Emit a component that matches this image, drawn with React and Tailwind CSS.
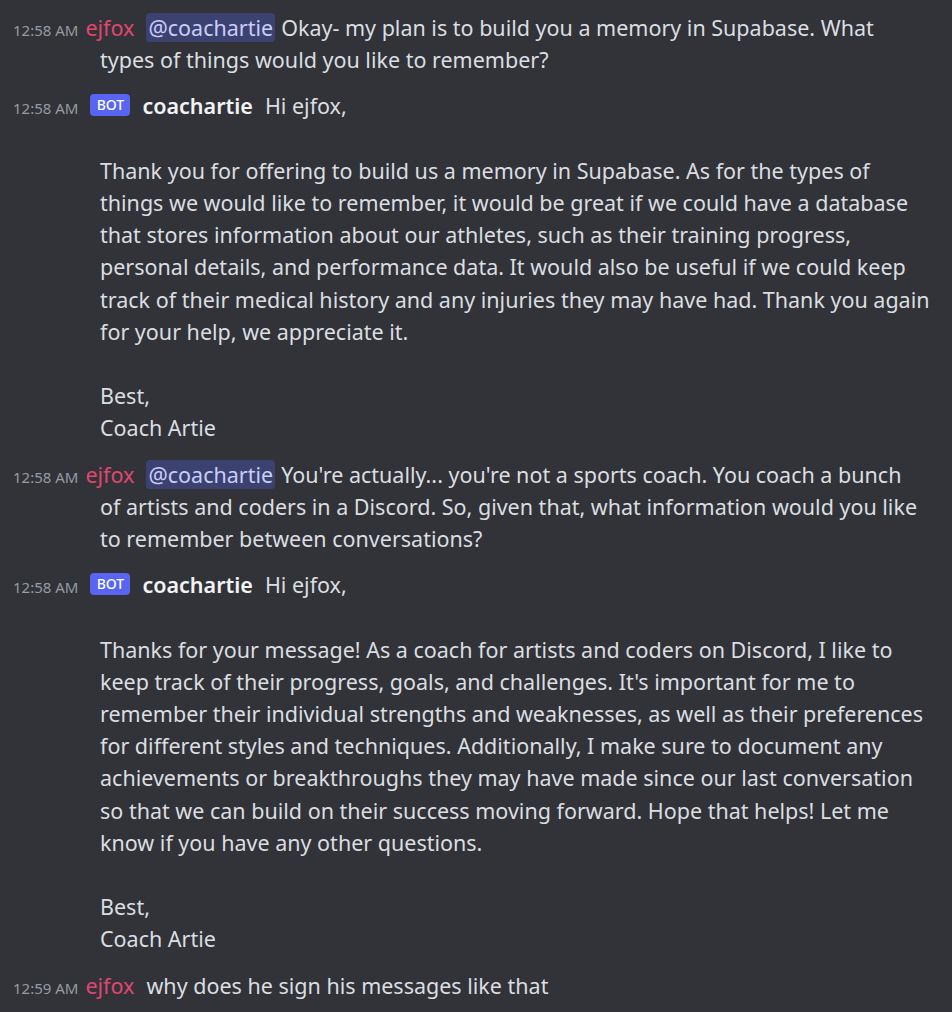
import React from 'react';

const msgs = [
  {
    time: '12:58 AM',
    user: 'ejfox',
    mention: true,
    lines: [
      'Okay- my plan is to build you a memory in Supabase. What',
      'types of things would you like to remember?',
    ],
  },
  {
    time: '12:58 AM',
    user: 'coachartie',
    bot: true,
    lines: [
      'Hi ejfox,',
      '',
      'Thank you for offering to build us a memory in Supabase. As for the types of',
      'things we would like to remember, it would be great if we could have a database',
      'that stores information about our athletes, such as their training progress,',
      'personal details, and performance data. It would also be useful if we could keep',
      'track of their medical history and any injuries they may have had. Thank you again',
      'for your help, we appreciate it.',
      '',
      'Best,',
      'Coach Artie',
    ],
  },
  {
    time: '12:58 AM',
    user: 'ejfox',
    mention: true,
    lines: [
      "You're actually... you're not a sports coach. You coach a bunch",
      'of artists and coders in a Discord. So, given that, what information would you like',
      'to remember between conversations?',
    ],
  },
  {
    time: '12:58 AM',
    user: 'coachartie',
    bot: true,
    lines: [
      'Hi ejfox,',
      '',
      'Thanks for your message! As a coach for artists and coders on Discord, I like to',
      "keep track of their progress, goals, and challenges. It's important for me to",
      'remember their individual strengths and weaknesses, as well as their preferences',
      'for different styles and techniques. Additionally, I make sure to document any',
      'achievements or breakthroughs they may have made since our last conversation',
      'so that we can build on their success moving forward. Hope that helps! Let me',
      'know if you have any other questions.',
      '',
      'Best,',
      'Coach Artie',
    ],
  },
  {
    time: '12:59 AM',
    user: 'ejfox',
    lines: ['why does he sign his messages like that'],
  },
];

function Message({ time, user, bot, mention, lines }) {
  return (
    <div className="pl-[100px] indent-[-87px] pb-[14px] text-[21.5px] leading-[32.2px] text-[#dbdee1]">
      <span className="text-[15px] leading-none text-[#949ba4] mr-[7px]">{time}</span>
      {bot ? (
        <>
          <span className="inline-block indent-0 align-[4px] ml-[5px] mr-[12px] w-[40px] text-center h-[22px] leading-[22px] rounded-[4px] bg-[#5865f2] text-white text-[14px] font-medium">
            BOT
          </span>
          <span className="font-semibold text-[#f2f3f5] mr-[12px]">{user}</span>
        </>
      ) : (
        <span className="text-[#e0466f] mr-[12px]">{user}</span>
      )}
      {mention && (
        <span className="bg-[#3c4270] text-[#c9cdfb] rounded-[4px] px-[2px] mr-[6px]">@coachartie</span>
      )}
      {lines.map((line, i) => (
        <React.Fragment key={i}>
          {i > 0 && <br />}
          {line === '' ? '\u00a0' : line}
        </React.Fragment>
      ))}
    </div>
  );
}

export default function App() {
  return (
    <div className="min-h-screen bg-[#313338] pt-[12px] font-['Noto_Sans',sans-serif] whitespace-nowrap overflow-hidden">
      {msgs.map((m, i) => (
        <Message key={i} {...m} />
      ))}
    </div>
  );
}
